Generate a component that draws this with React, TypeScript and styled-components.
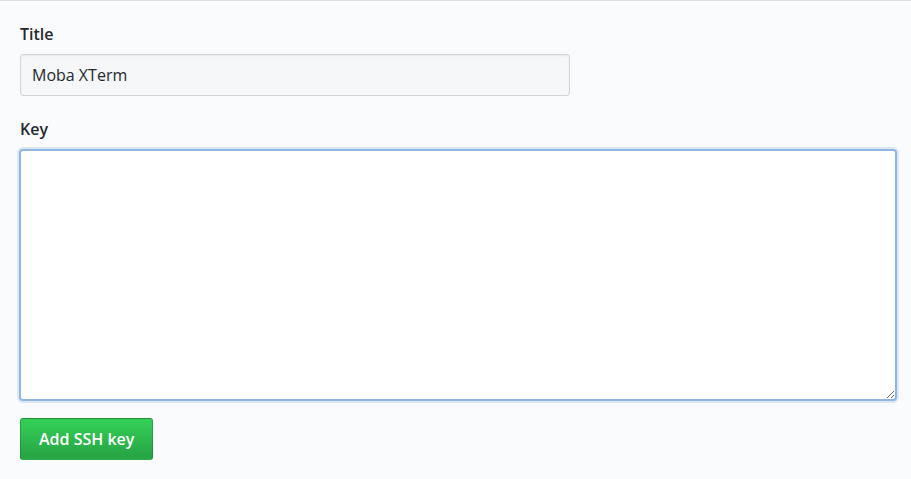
import React from 'react';
import styled, { createGlobalStyle } from 'styled-components';

const GlobalStyle = createGlobalStyle`
  html, body {
    margin: 0;
    padding: 0;
    background: #fafbfc;
    font-family: "Open Sans", "Noto Sans", "Liberation Sans", sans-serif;
    color: #24292e;
  }
`;

const Page = styled.div`
  width: 911px;
  height: 479px;
  box-sizing: border-box;
  border-top: 1px solid #dcdfe3;
  background: #fafbfc;
  padding: 22px 14px 0 20px;
`;

const Form = styled.form`
  display: flex;
  flex-direction: column;
`;

const Group = styled.div`
  display: flex;
  flex-direction: column;
  margin-bottom: 22px;
`;

const Label = styled.label`
  font-size: 16px;
  font-weight: 600;
  line-height: 22px;
  margin-bottom: 9px;
  color: #24292e;
`;

const TextInput = styled.input`
  width: 550px;
  height: 42px;
  box-sizing: border-box;
  padding: 0 11px;
  font-family: inherit;
  font-size: 16px;
  color: #24292e;
  background: #f5f7f9;
  border: 1px solid #d1d5da;
  border-radius: 3px;
  box-shadow: inset 0 1px 2px rgba(27, 31, 35, 0.06);
  outline: none;
`;

const KeyArea = styled.textarea`
  width: 878px;
  height: 252px;
  margin-left: -1px;
  box-sizing: border-box;
  padding: 8px 10px;
  font-family: inherit;
  font-size: 14px;
  background: #ffffff;
  border: 2px solid #8fb6df;
  border-radius: 4px;
  box-shadow: 0 0 0 2px rgba(3, 102, 214, 0.12);
  outline: none;
  resize: both;
`;

const SubmitButton = styled.button`
  align-self: flex-start;
  height: 42px;
  padding: 0 18px;
  margin-top: -5px;
  font-family: inherit;
  font-size: 16px;
  font-weight: 600;
  color: #ffffff;
  background: linear-gradient(-180deg, #34d058 0%, #28a745 90%);
  border: 1px solid rgba(27, 31, 35, 0.2);
  border-radius: 3px;
  cursor: pointer;
`;

const App: React.FC = () => {
  return (
    <>
      <GlobalStyle />
      <Page>
        <Form onSubmit={e => e.preventDefault()}>
          <Group>
            <Label htmlFor="ssh-title">Title</Label>
            <TextInput id="ssh-title" type="text" defaultValue="Moba XTerm" />
          </Group>
          <Group>
            <Label htmlFor="ssh-key">Key</Label>
            <KeyArea id="ssh-key" />
          </Group>
          <SubmitButton type="submit">Add SSH key</SubmitButton>
        </Form>
      </Page>
    </>
  );
};

export default App;
